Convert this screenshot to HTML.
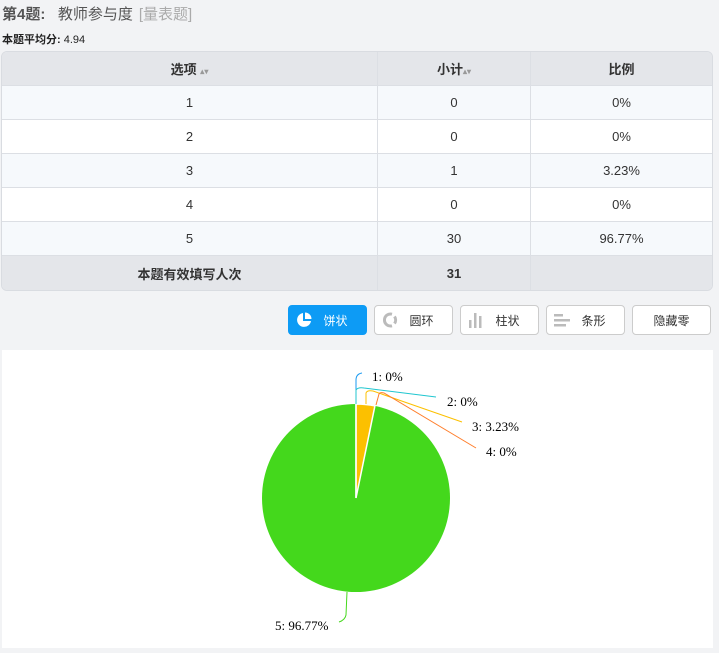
<!DOCTYPE html>
<html><head><meta charset="utf-8"><style>
*{box-sizing:border-box;margin:0;padding:0}
body{width:719px;height:651px;background:#f2f3f5;font-family:"Liberation Sans","Noto Sans CJK SC",sans-serif;color:#333;position:relative;overflow:hidden}
.t1{position:absolute;left:2px;top:3px;font-size:15px;color:#555}
.t1 b{color:#555}
.t1 .g{color:#aaa;margin-left:6px}
.avg{position:absolute;left:2px;top:31px;font-size:11px;color:#222}
table{position:absolute;left:1px;top:51px;width:712px;border-collapse:separate;border-spacing:0;border:1px solid #d9dce1;border-radius:6px;overflow:hidden;font-size:13px}
td,th{height:34px;text-align:center;border-bottom:1px solid #dcdfe4;border-right:1px solid #dcdfe4}
td:last-child,th:last-child{border-right:none}
tr:last-child td{border-bottom:none;background:#e4e6ea;font-weight:bold}
th{background:#e4e6ea;font-weight:bold}
tr.a td{background:#f6f9fc}
tr.b td{background:#fff}
.s{font-size:8px;color:#999}
.btn{position:absolute;top:305px;width:79px;height:30px;border:1px solid #ccc;border-radius:4px;background:#fff;font-size:12px;color:#333;display:flex;align-items:center}
.btn span{position:absolute;left:0;right:0;text-align:center;padding-left:16px}
.btn svg{position:absolute;left:6px;top:5px}
.panel{position:absolute;left:2px;top:350px;width:711px;height:298px;background:#fff}
</style></head><body>
<div class="t1"><b>第4题:</b>&nbsp;&nbsp;&nbsp;教师参与度<span class="g">[量表题]</span></div>
<div class="avg"><b>本题平均分:</b> 4.94</div>
<table>
<tr><th style="width:376px">选项 <span class="s">▴▾</span></th><th style="width:153px">小计<span class="s">▴▾</span></th><th>比例</th></tr>
<tr class="a"><td>1</td><td>0</td><td>0%</td></tr>
<tr class="b"><td>2</td><td>0</td><td>0%</td></tr>
<tr class="a"><td>3</td><td>1</td><td>3.23%</td></tr>
<tr class="b"><td>4</td><td>0</td><td>0%</td></tr>
<tr class="a"><td>5</td><td>30</td><td>96.77%</td></tr>
<tr><td>本题有效填写人次</td><td>31</td><td></td></tr>
</table>
<div class="btn" style="left:288px;background:#0d9bf5;border-color:#0d9bf5;color:#fff"><svg width="18" height="18" viewBox="0 0 18 18"><path d="M8 2A7 7 0 1 0 16 10H8Z" fill="#fff"/><path d="M10 1.5A6.5 6.5 0 0 1 16.5 8H10Z" fill="#fff"/></svg><span>饼状</span></div>
<div class="btn" style="left:374px"><svg width="18" height="18" viewBox="0 0 18 18"><path d="M11 3.2A6 6 0 1 0 11 14.8" fill="none" stroke="#bbb" stroke-width="3"/><path d="M13.5 5.5A6 6 0 0 1 13.5 12.5" fill="none" stroke="#bbb" stroke-width="3"/></svg><span>圆环</span></div>
<div class="btn" style="left:460px"><svg width="18" height="18" viewBox="0 0 18 18"><rect x="2" y="9" width="2.5" height="8" fill="#bbb"/><rect x="7" y="2" width="2.5" height="15" fill="#bbb"/><rect x="12" y="5" width="2.5" height="12" fill="#bbb"/></svg><span>柱状</span></div>
<div class="btn" style="left:546px"><svg width="18" height="18" viewBox="0 0 18 18"><rect x="1" y="3" width="9" height="2.5" fill="#bbb"/><rect x="1" y="8" width="16" height="2.5" fill="#bbb"/><rect x="1" y="13" width="12" height="2.5" fill="#bbb"/></svg><span>条形</span></div>
<div class="btn" style="left:632px"><span style="padding-left:0">隐藏零</span></div>
<div class="panel">
<svg width="711" height="298" viewBox="2 350 711 298" style="font-family:'Liberation Serif',serif;font-size:13px">
<circle cx="356" cy="498" r="94" fill="#44d81c"/>
<path d="M356 498L356 404A94 94 0 0 1 374.9 405.9Z" fill="#fcc000" stroke="#fff" stroke-width="1.5"/>
<line x1="356" y1="498" x2="356" y2="404" stroke="#fff" stroke-width="1.5"/>
<path d="M356 404V380Q356 374 362 373" fill="none" stroke="#1a9af0"/>
<path d="M356 404V390Q358 387 364 388L436 397" fill="none" stroke="#20c6cf"/>
<path d="M366 404V393Q367 390 373 391L462 422" fill="none" stroke="#fcc000"/>
<path d="M376 405L379 394Q380 392 384 393L476 448" fill="none" stroke="#ff7d2a"/>
<path d="M347 592L346 615Q345 620 339 622" fill="none" stroke="#44d81c"/>
<text x="372" y="381">1: 0%</text>
<text x="447" y="406">2: 0%</text>
<text x="472" y="431">3: 3.23%</text>
<text x="486" y="456">4: 0%</text>
<text x="275" y="630">5: 96.77%</text>
</svg>
</div>
</body></html>
